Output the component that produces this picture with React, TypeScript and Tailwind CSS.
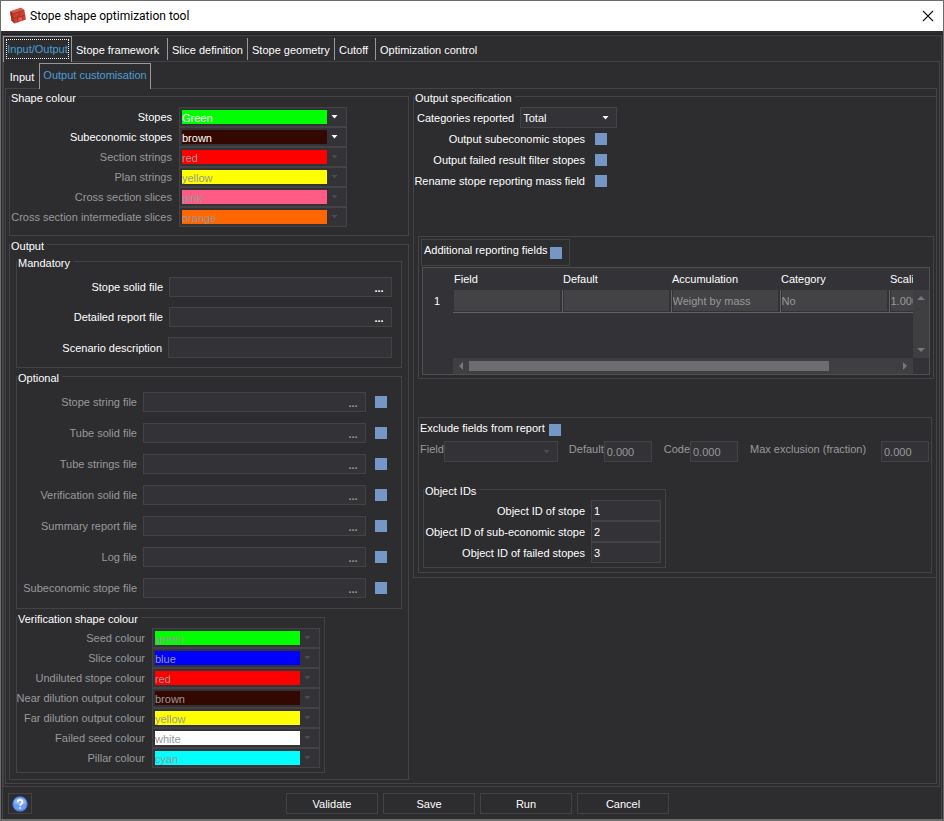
import { useState } from "react";
import type { ReactNode } from "react";

type Swatch = { id: string; label: string; value: string; bg: string; off?: boolean };

const shapeColours: Swatch[] = [
  { id: "stopes", label: "Stopes", value: "Green", bg: "bg-[#00ff00]" },
  { id: "sub-stopes", label: "Subeconomic stopes", value: "brown", bg: "bg-[#330800]" },
  { id: "section", label: "Section strings", value: "red", bg: "bg-[#ff0000]", off: true },
  { id: "plan", label: "Plan strings", value: "yellow", bg: "bg-[#ffff00]", off: true },
  { id: "cross", label: "Cross section slices", value: "pink", bg: "bg-[#ff5b84]", off: true },
  { id: "cross-mid", label: "Cross section intermediate slices", value: "orange", bg: "bg-[#ff6600]", off: true },
];

const verificationColours: Swatch[] = [
  { id: "seed", label: "Seed colour", value: "green", bg: "bg-[#00ff00]", off: true },
  { id: "slice", label: "Slice colour", value: "blue", bg: "bg-[#0000ff]", off: true },
  { id: "undiluted", label: "Undiluted stope colour", value: "red", bg: "bg-[#ff0000]", off: true },
  { id: "near", label: "Near dilution output colour", value: "brown", bg: "bg-[#330800]", off: true },
  { id: "far", label: "Far dilution output colour", value: "yellow", bg: "bg-[#ffff00]", off: true },
  { id: "failed-seed", label: "Failed seed colour", value: "white", bg: "bg-white", off: true },
  { id: "pillar", label: "Pillar colour", value: "cyan", bg: "bg-[#00ffff]", off: true },
];

const optionalFiles = [
  "Stope string file",
  "Tube solid file",
  "Tube strings file",
  "Verification solid file",
  "Summary report file",
  "Log file",
  "Subeconomic stope file",
];

const columns = [
  { name: "Field", value: "" },
  { name: "Default", value: "" },
  { name: "Accumulation", value: "Weight by mass" },
  { name: "Category", value: "No" },
  { name: "Scaling", short: "Scali", value: "1.000" },
];

const objectIds = [
  { label: "Object ID of stope", value: "1" },
  { label: "Object ID of sub-economic stope", value: "2" },
  { label: "Object ID of failed stopes", value: "3" },
];

const mainTabs = [
  { name: "Stope framework", className: "w-24 border-r" },
  { name: "Slice definition", className: "w-20 border-r" },
  { name: "Stope geometry", className: "w-[87px] border-r" },
  { name: "Cutoff", className: "w-[41px] border-r" },
  { name: "Optimization control", className: "" },
];

function Arrow({ off }: { off?: boolean }) {
  return (
    <svg width="7" height="4" viewBox="0 0 7 4" className={off ? "fill-[#4c4c50]" : "fill-white"} aria-hidden="true">
      <path d="M0.5 0h6L3.5 3.5z" />
    </svg>
  );
}

function Group({ title, className, children }: { title: string; className: string; children: ReactNode }) {
  return (
    <fieldset className={`min-w-0 border border-[#434346] ${className}`}>
      <legend className="pt-[3px] pr-[3px] pl-px leading-3">{title}</legend>
      {children}
    </fieldset>
  );
}

function Check({ id, label }: { id: string; label?: string }) {
  const [on, setOn] = useState(false);
  return (
    <input
      id={id}
      type="checkbox"
      aria-label={label}
      checked={on}
      onChange={(e) => setOn(e.target.checked)}
      className="size-3 shrink-0 appearance-none bg-[#7497c5] checked:bg-[#4a77b4]"
    />
  );
}

function ColourRows({ rows, labelWidth }: { rows: Swatch[]; labelWidth: string }) {
  return rows.map((r) => (
    <div key={r.id} className="flex h-5 items-center">
      <label htmlFor={r.id} className={`flex justify-end whitespace-nowrap ${labelWidth} ${r.off ? "text-[#999999]" : ""}`}>
        {r.label}
      </label>
      <div className="ml-[7px] flex h-5 w-[168px] items-center border border-[#434346] bg-[#333337] p-[2px]">
        <select
          id={r.id}
          disabled={r.off}
          className={`h-[14px] w-[145px] appearance-none pt-[2px] leading-3 opacity-100 ${r.bg} ${r.off ? "text-[#999999]" : "text-white"}`}
        >
          <option>{r.value}</option>
        </select>
        <span className="pl-1"><Arrow off={r.off} /></span>
      </div>
    </div>
  ));
}

function FileBox({ id, off }: { id: string; off?: boolean }) {
  return (
    <div className="ml-[6px] flex h-5 w-[223px] border border-[#434346] bg-[#333337]">
      <input id={id} type="text" disabled={off} className="min-w-0 flex-1 px-1" />
      <button type="button" disabled={off} aria-label={`Browse ${id}`} className={`w-6 pt-[2px] font-bold ${off ? "text-[#999999]" : ""}`}>
        ...
      </button>
    </div>
  );
}

function NumberBox({ id, label }: { id: string; label: string }) {
  return (
    <>
      <label htmlFor={id} className="pt-[2px] whitespace-nowrap">{label}</label>
      <input id={id} disabled defaultValue="0.000" className="h-[21px] w-12 border border-[#434346] bg-[#333337] px-[2px] pt-px" />
    </>
  );
}

function Logo() {
  return (
    <svg width="18" height="18" viewBox="0 0 18 18" aria-hidden="true">
      <path d="M1 4.500 12 .8l3.300 2.400L17 12.500 5.500 16.500 2.500 13.500z" fill="#cb4433" />
      <path d="M1 4.500 12 .8l3.300 2.400L4.600 6.500z" fill="#d95a48" />
      <path d="M1 4.500 4.600 6.500 5.500 16.500l-3-3z" fill="#a83226" />
      <path d="M4.600 6.500 15.300 3.200M5 11.300l11.200-3.300M10 4.900l.5 4.800M8.500 10.300l.5 5M13 9l.7 4.600" stroke="#96291f" strokeWidth=".7" fill="none" />
      <path d="m9.500 11 3.300-1 .6 3.400-3.500 1.200z" fill="#e45b48" />
    </svg>
  );
}

function TitleBar() {
  return (
    <header className="flex h-[30px] items-center bg-white pr-[9px] pl-2 text-black">
      <Logo />
      <h1 className="ml-[3px] flex-1 font-[Roboto,sans-serif] text-[12px] leading-4">Stope shape optimization tool</h1>
      <button type="button" aria-label="Close">
        <svg width="12" height="12" viewBox="0 0 12 12" fill="none" stroke="#111" strokeWidth="1.1">
          <path d="m1 1 10 10M11 1 1 11" />
        </svg>
      </button>
    </header>
  );
}

function ReportingFields() {
  return (
    <section className="mt-[45px] mr-[2px] ml-1 border border-[#434346] p-[2px]">
      <div className="flex h-[27px] w-[149px] items-center border border-[#434346] pl-[2px]">
        <label htmlFor="additional" className="-mt-1 flex-1 whitespace-nowrap">Additional reporting fields</label>
        <span className="mr-[7px] flex"><Check id="additional" /></span>
      </div>
      <div className="mx-px mt-px mb-px border border-[#505053] bg-[#333337]">
        <div className="flex h-[90px]">
          <div className="min-w-0 flex-1 overflow-hidden">
            <table className="w-[575px] table-fixed border-collapse text-left">
              <thead>
                <tr className="h-[22px]">
                  <th className="w-[30px] p-0" />
                  {columns.map((c) => (
                    <th key={c.name} className="w-[109px] p-0 pl-px font-normal">{c.short ?? c.name}</th>
                  ))}
                </tr>
              </thead>
              <tbody>
                <tr className="h-[22px]">
                  <th className="p-0 pr-[2px] text-center font-normal">1</th>
                  {columns.map((c) => (
                    <td key={c.name} className="border-r border-b border-[#626265] p-0 pr-[2px] pl-px">
                      <input
                        disabled
                        aria-label={c.name}
                        defaultValue={c.value}
                        className="block h-[21px] w-full bg-[#434345] text-[#999999]"
                      />
                    </td>
                  ))}
                </tr>
              </tbody>
            </table>
          </div>
          <div className="mt-[22px] flex w-4 flex-col items-center justify-between bg-[#3f3f42] py-[6px]">
            <svg width="8" height="4" className="fill-[#77777a]"><path d="M0 4h8L4 0z" /></svg>
            <svg width="8" height="4" className="fill-[#77777a]"><path d="M0 0h8L4 4z" /></svg>
          </div>
        </div>
        <div className="mr-4 ml-[30px] flex h-4 items-center bg-[#3f3f42]">
          <svg width="16" height="8" className="fill-[#77777a]"><path d="M10 0v8L6 4z" /></svg>
          <div className="flex flex-1">
            <div className="h-[10px] w-[84%] bg-[#6d6d70]" />
          </div>
          <svg width="16" height="8" className="fill-[#77777a]"><path d="M6 0v8l4-4z" /></svg>
        </div>
      </div>
    </section>
  );
}

function ExcludeFields() {
  return (
    <section className="mt-[38px] mr-1 ml-1 border border-[#434346] pb-1">
      <div className="flex items-center pt-[3px] pl-px">
        <label htmlFor="exclude">Exclude fields from report</label>
        <span className="mt-[3px] ml-1 flex"><Check id="exclude" /></span>
      </div>
      <div className="mt-[5px] flex items-start pr-[2px] pl-px text-[#999999]">
        <label htmlFor="field" className="pt-[2px]">Field</label>
        <div className="mr-[11px] flex h-[21px] w-[114px] items-center border border-[#434346] bg-[#333337] pr-[7px]">
          <select id="field" disabled className="min-w-0 flex-1 appearance-none opacity-100">
            <option />
          </select>
          <Arrow off />
        </div>
        <div className="mr-3 flex items-start"><NumberBox id="default" label="Default" /></div>
        <div className="mr-3 flex items-start"><NumberBox id="code" label="Code" /></div>
        <div className="flex flex-1 items-start justify-between"><NumberBox id="max" label="Max exclusion (fraction)" /></div>
      </div>
      <Group title="Object IDs" className="mt-[20px] ml-1 w-[243px] pt-[3px] pb-1">
        {objectIds.map((o) => (
          <div key={o.value} className="flex h-[21px] items-center">
            <label htmlFor={`oid-${o.value}`} className="w-[161px] pt-px text-right whitespace-nowrap">{o.label}</label>
            <input id={`oid-${o.value}`} defaultValue={o.value} className="ml-[6px] h-[21px] w-[70px] border border-[#434346] bg-[#333337] px-[2px]" />
          </div>
        ))}
      </Group>
    </section>
  );
}

function OutputSpecification() {
  return (
    <Group title="Output specification" className="flex-1 border-r-0 pt-[3px] pb-1">
      <div className="flex h-[21px] items-center pl-[3px]">
        <label htmlFor="categories" className="pt-px">Categories reported</label>
        <div className="ml-[6px] flex h-[21px] w-[97px] items-center border border-[#434346] bg-[#333337] pr-[7px] pl-[2px]">
          <select id="categories" className="min-w-0 flex-1 appearance-none pt-px">
            <option>Total</option>
          </select>
          <Arrow />
        </div>
      </div>
      {["Output subeconomic stopes", "Output failed result filter stopes", "Rename stope reporting mass field"].map((t) => (
        <div key={t} className="flex h-[21px] items-center">
          <label htmlFor={t} className="mr-[10px] w-[171px] pt-px text-right whitespace-nowrap">{t}</label>
          <Check id={t} />
        </div>
      ))}
      <ReportingFields />
      <ExcludeFields />
    </Group>
  );
}

function OutputFiles() {
  return (
    <Group title="Output" className="mt-px pt-[2px] pb-[6px]">
      <div className="px-[6px]">
        <Group title="Mandatory" className="pt-2 pb-[9px]">
          <div className="flex flex-col gap-[10px]">
            {["Stope solid file", "Detailed report file"].map((t) => (
              <div key={t} className="flex items-center">
                <label htmlFor={t} className="w-[146px] text-right">{t}</label>
                <FileBox id={t} />
              </div>
            ))}
            <div className="flex items-center">
              <label htmlFor="scenario" className="w-[145px] pt-px text-right">Scenario description</label>
              <input id="scenario" className="ml-[6px] h-[21px] w-56 border border-[#434346] bg-[#333337] px-1" />
            </div>
          </div>
        </Group>
        <Group title="Optional" className="mt-px pt-2 pb-[10px]">
          <div className="flex flex-col gap-[11px]">
            {optionalFiles.map((t) => (
              <div key={t} className="flex items-center">
                <label htmlFor={t} className="w-[120px] pt-px text-right text-[#999999]">{t}</label>
                <FileBox id={t} off />
                <span className="ml-[9px] flex"><Check id={`use ${t}`} label={`Use ${t}`} /></span>
              </div>
            ))}
          </div>
        </Group>
        <Group title="Verification shape colour" className="mt-px w-[309px] pt-[3px] pb-1">
          <ColourRows rows={verificationColours} labelWidth="w-[128px]" />
        </Group>
      </div>
    </Group>
  );
}

export default function App() {
  return (
    <div className="flex min-h-screen flex-col border border-b-2 border-[#6c6c6c] bg-[#2d2d30] font-['Liberation_Sans',Arial,sans-serif] text-[11px] leading-[13px] text-white">
      <TitleBar />
      <div className="mx-px mt-[3px] flex flex-1 flex-col border-t border-[#1f1f21]">
        <main className="flex flex-1 flex-col border-x border-t border-[#434346]">
          <nav className="flex h-[25px]">
            <button type="button" className="z-10 -mb-px w-[69px] border border-b-0 border-[#999999] bg-[#2d2d30] p-[2px] pb-[3px] text-[#4a9fd4]">
              <span className="flex h-5 items-center justify-center border border-dotted border-white whitespace-nowrap">Input/Output</span>
            </button>
            {mainTabs.map((t) => (
              <button
                key={t.name}
                type="button"
                className={`mt-[2px] mb-px border-[#999999] pt-[2px] pl-1 text-left whitespace-nowrap ${t.className}`}
              >
                {t.name}
              </button>
            ))}
          </nav>
          <div className="mr-px flex flex-1 flex-col border border-[#434346] pt-px pr-[2px] pb-[2px] pl-px">
            <nav className="flex h-[25px]">
              <button type="button" className="w-[34px] pt-1">Input</button>
              <button type="button" className="z-10 -mb-px w-[112px] border border-b-0 border-[#999999] bg-[#2d2d30] pb-[3px] whitespace-nowrap text-[#4a9fd4]">
                Output customisation
              </button>
            </nav>
            <div className="flex flex-1 items-start gap-1 border border-[#434346] pb-[3px] pl-[3px]">
              <div className="w-[400px] shrink-0">
                <Group title="Shape colour" className="pt-[3px] pb-2">
                  <ColourRows rows={shapeColours} labelWidth="w-[162px]" />
                </Group>
                <OutputFiles />
              </div>
              <OutputSpecification />
            </div>
          </div>
          <footer className="flex items-center pt-[6px] pr-[18px] pb-[5px] pl-[5px]">
            <button type="button" aria-label="Help" className="flex h-[21px] w-6 items-center justify-center border border-[#434346]">
              <svg width="16" height="16" viewBox="0 0 16 16">
                <circle cx="8" cy="8" r="7.700" fill="#4a74d8" />
                <circle cx="8" cy="8" r="6.600" fill="#6f9cf3" />
                <path d="M1.900 7a6.100 5.400 0 0 1 12.200 0q-6 3-12.200 0z" fill="#8fb4fa" />
                <path d="M5.700 6.200c0-3 4.800-3 4.800-.2 0 1.700-2.300 1.800-2.300 3.700M8.200 11.200v1.500" stroke="#fff" strokeWidth="1.700" fill="none" />
              </svg>
            </button>
            <div className="flex flex-1 justify-center gap-[5px]">
              {["Validate", "Save", "Run", "Cancel"].map((t) => (
                <button key={t} type="button" className="h-[21px] w-[92px] border border-[#434346] pt-px">{t}</button>
              ))}
            </div>
          </footer>
        </main>
      </div>
    </div>
  );
}
